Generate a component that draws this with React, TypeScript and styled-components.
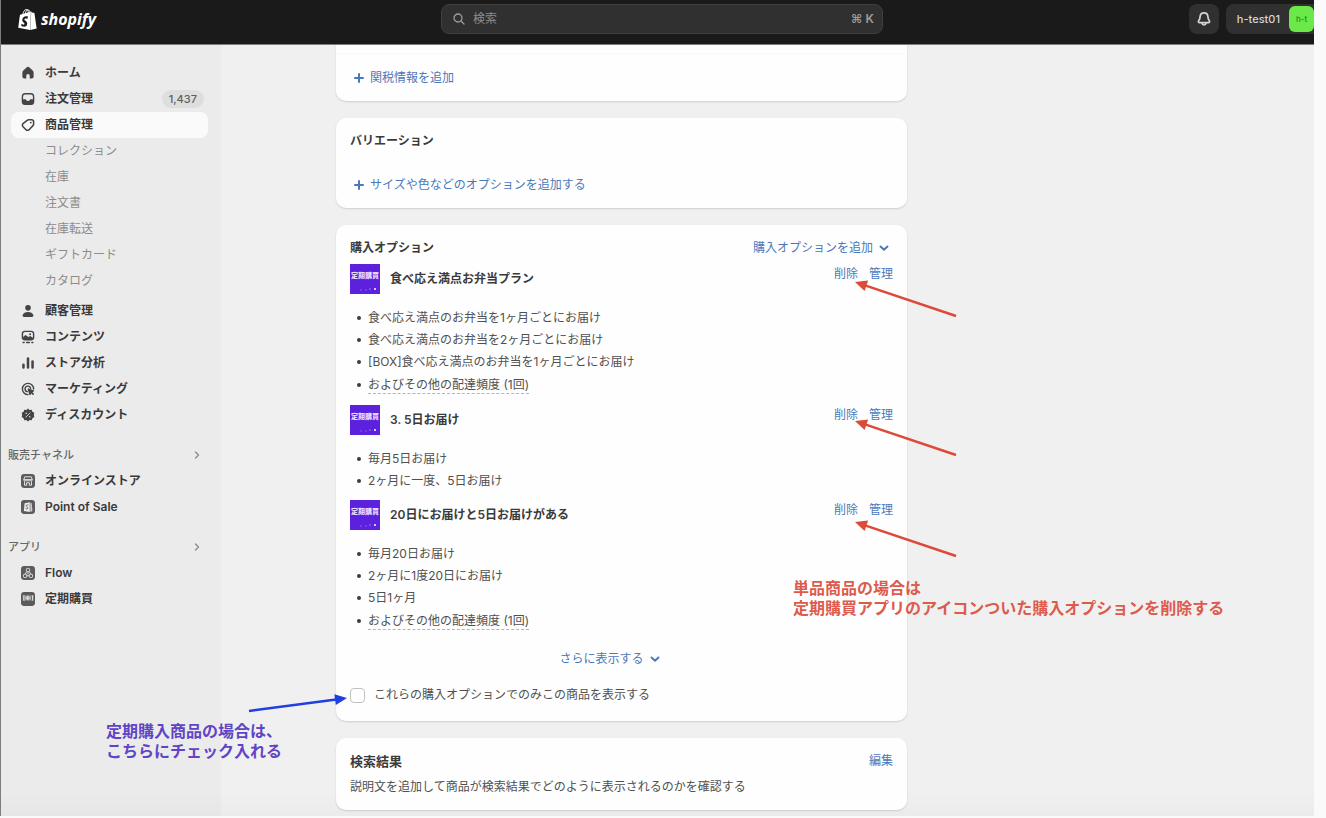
import React from "react";
import styled, { createGlobalStyle, css } from "styled-components";
import { SiShopify } from "react-icons/si";

const fontStack = `Inter, "Noto Sans CJK JP", sans-serif`;
const color = {
  text: "#3a3a3a",
  body: "#505050",
  muted: "#8c8c8c",
  link: "#4a79ba",
  red: "#dc4a38",
  redText: "#dd5b4c",
  blue: "#1f3fe0",
  purple: "#6144c6",
};

const GlobalStyle = createGlobalStyle`
  * { box-sizing: border-box; }
  body {
    margin: 0;
    background: #fafafa;
    color: ${color.text};
    font-family: ${fontStack};
    font-size: 12px;
    line-height: 20px;
  }
  button, input { font: inherit; color: inherit; }
  button { border: 0; padding: 0; background: none; cursor: pointer; }
  ul { list-style: none; margin: 0; padding: 0; }
  h2, h3, p { margin: 0; font-size: inherit; }
  a { text-decoration: none; color: inherit; }
`;

const Frame = styled.div`
  position: relative;
  display: flex;
  flex-direction: column;
  min-height: calc(100vh - 2px);
  margin: 0 12px 2px 0;
  border-left: 1px solid #7c7f82;
  background: linear-gradient(to top, #ebebeb, #f0f0f0 24px);
`;

const TopBar = styled.header`
  display: grid;
  grid-template-columns: 1fr minmax(0, 442px) 1fr;
  align-items: center;
  height: 45px;
  padding: 0 0 6px 9px;
  background: #1a1a1a;
  border-bottom: 1px solid #7d7d7d;
`;

const Brand = styled.a`
  display: flex;
  align-items: center;
  gap: 3px;
  padding-left: 7px;
  color: #fff;
  font: italic 700 16px/24px "Open Sans", sans-serif;
`;

const SearchBox = styled.label`
  display: flex;
  align-items: center;
  gap: 8px;
  height: 30px;
  padding: 0 8px 0 11px;
  border: 1px solid #3e3e3e;
  border-radius: 8px;
  background: #303030;
  color: #9c9c9c;
`;

const SearchInput = styled.input`
  flex: 1;
  min-width: 0;
  padding: 0;
  border: 0;
  outline: 0;
  background: none;
  &::placeholder { color: #8c8c8c; opacity: 1; }
`;

const Shortcut = styled.kbd`
  font: 600 12px/20px Inter, "DejaVu Sans", sans-serif;
`;

const TopActions = styled.div`
  display: flex;
  justify-content: flex-end;
  gap: 7px;
`;

const BellButton = styled.button`
  display: grid;
  place-items: center;
  width: 30px;
  height: 30px;
  border-radius: 8px;
  background: #303030;
  color: #d4d4d4;
`;

const AccountButton = styled.button`
  display: flex;
  align-items: center;
  gap: 9px;
  height: 30px;
  padding-left: 11px;
  border-radius: 8px 0 0 8px;
  background: #303030;
  color: #d4d4d4;
  font-size: 11px;
  font-weight: 500;
`;

const Avatar = styled.span`
  display: grid;
  place-items: center;
  width: 25px;
  height: 26px;
  border-radius: 6px;
  background: #6be84a;
  color: #2f8a24;
  font-size: 8px;
`;

const Body = styled.div`
  display: flex;
  flex: 1;
`;

const Sidebar = styled.nav`
  flex: none;
  width: 220px;
  padding: 15px 13px 14px 0;
  background: linear-gradient(to top, #e6e6e6, #ebebeb 24px);
`;

const NavGroup = styled.ul`
  margin-top: 4px;
  padding-left: 10px;
  &:first-child { margin-top: 0; }
`;

const NavLink = styled.a<{ $active?: boolean; $sub?: boolean }>`
  display: flex;
  align-items: center;
  gap: 10px;
  height: 26px;
  padding: 0 4px 0 10px;
  border-radius: 8px;
  font-weight: 600;
  ${(p) => p.$active && css`background: #fafafa;`}
  ${(p) => p.$sub && css`
    padding-left: 34px;
    font-weight: 400;
    color: ${color.muted};
  `}
`;

const NavIcon = styled.svg`
  flex: none;
  width: 14px;
  height: 14px;
  color: #444;
`;

const Count = styled.span`
  margin-left: auto;
  padding: 0 7px;
  border-radius: 9px;
  background: #dedede;
  color: #606060;
  font-size: 11px;
  font-weight: 500;
  line-height: 18px;
`;

const SectionButton = styled.button`
  display: flex;
  align-items: center;
  justify-content: space-between;
  width: 100%;
  height: 26px;
  padding: 0 6px 0 7px;
  margin-top: 14px;
  color: #666;
  font-size: 11px;
  font-weight: 500;
  & > svg { color: #8c8c8c; }
  & + ${NavGroup} { margin-top: 0; }
`;

const Content = styled.main`
  flex: 1;
  display: grid;
  grid-template-columns: minmax(0, 1fr) 276px;
  align-content: start;
  gap: 16px;
  padding: 0 115px 6px;
`;

const Cards = styled.div`
  display: flex;
  flex-direction: column;
  gap: 17px;
`;

const Card = styled.section<{ $cut?: boolean }>`
  display: flex;
  flex-direction: column;
  padding: 13px 14px;
  border-radius: ${(p) => (p.$cut ? "0 0 10px 10px" : "10px")};
  background: #fefefe;
  box-shadow: 0 1px 2px rgba(0, 0, 0, 0.14);
  ${(p) => p.$cut && css`
    padding-top: 0;
    &::before {
      content: "";
      height: 8px;
      margin: 0 -14px 14px;
      border-bottom: 1px solid #f8f8f8;
    }
  `}
`;

const CardHead = styled.div`
  display: flex;
  justify-content: space-between;
`;

const CardTitle = styled.h2<{ $large?: boolean }>`
  font-size: ${(p) => (p.$large ? 13 : 12)}px;
  font-weight: 600;
`;

const LinkButton = styled.button<{ $menu?: boolean }>`
  display: flex;
  align-items: center;
  gap: 6px;
  padding-right: ${(p) => (p.$menu ? 4 : 0)}px;
  color: ${color.link};
  line-height: 20px;
`;

const AddRow = styled.div`
  display: flex;
  padding-left: 4px;
  ${CardHead} + & { margin-top: 24px; }
`;

const PlanList = styled.div`
  display: flex;
  flex-direction: column;
  gap: 8px;
  margin-top: 6px;
`;

const PlanHead = styled.div`
  display: flex;
  align-items: center;
  gap: 10px;
  height: 30px;
`;

const PlanTitle = styled.h3`
  flex: 1;
  font-weight: 600;
`;

const PlanActions = styled.div`
  display: flex;
  align-self: flex-start;
  gap: 11px;
`;

const AppTile = styled.span`
  position: relative;
  display: grid;
  justify-items: center;
  align-items: start;
  width: 30px;
  height: 30px;
  padding-top: 4px;
  overflow: hidden;
  background: #5b21dc;
  color: #ecd9fb;
  font-size: 7px;
  font-weight: 900;
  line-height: 16px;
  white-space: nowrap;
  &::after {
    content: "";
    position: absolute;
    right: 4px;
    bottom: 4px;
    width: 2px;
    height: 2px;
    border-radius: 1px;
    background: #fff;
    box-shadow: -5px 0 0 #8558ea, -9px 1px 0 #7a49e6, -14px 1px 0 #7a49e6;
  }
`;

const PlanItems = styled.ul`
  margin-top: 13px;
  padding-left: 7px;
  color: ${color.body};
`;

const PlanItem = styled.li`
  display: flex;
  align-items: center;
  gap: 7px;
  line-height: 22px;
  &::before {
    content: "";
    width: 4px;
    height: 4px;
    border-radius: 50%;
    background: #3c3c3c;
  }
`;

const MoreText = styled.span`
  margin: 3px 0;
  line-height: 17px;
  border-bottom: 1px dashed #b4b4b4;
`;

const ShowMore = styled.div`
  display: flex;
  justify-content: center;
  margin-top: 16px;
  padding-right: 24px;
`;

const CheckLabel = styled.label`
  display: flex;
  align-items: center;
  gap: 9px;
  height: 26px;
  margin-top: 13px;
  color: ${color.body};
`;

const Checkbox = styled.input`
  appearance: none;
  width: 15px;
  height: 15px;
  margin: 0;
  border: 1px solid #c0c0c0;
  border-radius: 4px;
  background: #fff;
`;

const Description = styled.p`
  margin-top: 6px;
  color: ${color.body};
`;

const Arrows = styled.svg`
  position: absolute;
  left: 0;
  top: 0;
  width: 1000px;
  height: 800px;
  pointer-events: none;
`;

const Note = styled.p<{ $x: number; $y: number; $color: string }>`
  position: absolute;
  left: ${(p) => p.$x}px;
  top: ${(p) => p.$y}px;
  color: ${(p) => p.$color};
  font-size: 16px;
  font-weight: 600;
  line-height: 20px;
  white-space: nowrap;
`;

const stroke = {
  fill: "none",
  stroke: "currentColor",
  strokeWidth: 2,
  strokeLinecap: "round" as const,
  strokeLinejoin: "round" as const,
};

const icons: Record<string, React.ReactNode> = {
  home: (
    <path fill="currentColor" d="M8.3 1.9a2.6 2.6 0 0 1 3.4 0l5 4.4A3.8 3.8 0 0 1 18 9.200V15.500a2.500 2.500 0 0 1-2.500 2.500H12.500v-4a2.500 2.500 0 0 0-5 0v4H4.500A2.500 2.500 0 0 1 2 15.500V9.200a3.800 3.800 0 0 1 1.300-2.900z" />
  ),
  orders: (
    <>
      <rect x="2" y="2.500" width="16" height="15" rx="4" {...stroke} />
      <path fill="currentColor" d="M2 10.500h4.500c.8 0 1 2.500 3.500 2.500s2.700-2.500 3.500-2.500H18V14a4 4 0 0 1-4 4H6a4 4 0 0 1-4-4z" />
    </>
  ),
  products: (
    <>
      <path {...stroke} strokeWidth={2.2} d="M11 2.500h4a3 3 0 0 1 3 3v3.300a3 3 0 0 1-.9 2.100l-5.600 5.800a3 3 0 0 1-4.300 0l-4.300-4.300a3 3 0 0 1 0-4.300l5.900-4.700A3 3 0 0 1 11 2.500z" />
      <circle cx="14" cy="6.500" r="1.300" fill="currentColor" />
    </>
  ),
  customers: (
    <path fill="currentColor" d="M10 1.500a4 4 0 1 1 0 8 4 4 0 0 1 0-8zM10 11.500c4 0 6.500 1.600 7.600 4.300.5 1.300-.4 2.700-1.800 2.700H4.200c-1.400 0-2.300-1.400-1.800-2.700C3.500 13.100 6 11.500 10 11.500z" />
  ),
  content: (
    <>
      <rect x="2" y="2" width="16" height="12" rx="3.500" {...stroke} />
      <path fill="currentColor" d="M3 10l3.500-3 4 3 2.500-1.500L17 11v1.500L15 14H5l-2-1.500z" />
      <circle cx="13" cy="6" r="1.400" fill="currentColor" />
      <path {...stroke} d="M3 17.800h1.500M8 17.800h4M15.500 17.800H17" />
    </>
  ),
  analytics: (
    <path {...stroke} strokeWidth={3.6} d="M3.500 12.500v4M10 3.500v13M16.500 8v8.500" />
  ),
  marketing: (
    <>
      <path {...stroke} d="M18 10a8 8 0 1 0-8 8" />
      <path {...stroke} d="M13.700 9a4 4 0 1 0-4.700 4.800" />
      <path fill="currentColor" d="M9.500 10.500c-.3-.8.400-1.400 1.200-1.200l7.300 2.500c1 .4 1 1.500.1 1.900l-1.800.8 2 2c.9 1-.8 2.700-1.800 1.800l-2-2-.8 1.800c-.4.9-1.500.9-1.900-.1z" />
    </>
  ),
  discounts: (
    <>
      <path fill="currentColor" d="M10 .8l2.300 1.900 3-.3 1 2.900 2.700 1.500L18.300 10l.7 3-2.700 1.600-1 2.800-3-.2L10 19.200l-2.300-2-3 .2-1-2.800L1 13l.7-3L1 6.800l2.700-1.500 1-2.900 3 .3z" />
      <path stroke="#cfcfcf" strokeWidth="1.400" strokeLinecap="round" d="M13 7l-6 6" />
      <circle cx="7.500" cy="7.500" r="1.200" fill="#cfcfcf" />
      <circle cx="12.500" cy="12.500" r="1.200" fill="#cfcfcf" />
    </>
  ),
  store: (
    <>
      <rect width="20" height="20" rx="4.500" fill="#5c5c5c" />
      <path fill="none" stroke="#e4e4e4" strokeWidth="1.400" strokeLinejoin="round" d="M5.200 4h9.600l1.400 4.500c-.6 2-2.500 2-3.200.3-.7 1.700-2.500 1.700-3 0-.6 1.700-2.400 1.700-3 0-.8 1.700-2.700 1.700-3.200-.3zM5 10.500V16h3v-3.500h4V16h3v-5.500M4 8h12" />
    </>
  ),
  pos: (
    <>
      <rect width="20" height="20" rx="4.500" fill="#5c5c5c" />
      <path fill="#ececec" d="M5.200 4.800l7.300-1.600v14L4 15.600z" />
      <path fill="#d0d0d0" d="M13.300 3.600l2 1.200 1 10.800-3 1.400z" />
      <path fill="none" stroke="#5c5c5c" strokeWidth="1.300" d="M10.500 7.200c-2-.9-3.300.2-3 1.300.3 1.200 2.300 1.300 2.200 2.900-.1 1.400-1.700 1.700-3.200.8" />
    </>
  ),
  flow: (
    <>
      <rect width="20" height="20" rx="4.500" fill="#5c5c5c" />
      <g fill="none" stroke="#dedede" strokeWidth="1.400">
        <rect x="7.700" y="3.500" width="4.600" height="4.600" rx="1.200" />
        <rect x="3.500" y="11.800" width="4.600" height="4.600" rx="1.200" />
        <rect x="11.900" y="11.800" width="4.600" height="4.600" rx="1.200" />
        <path d="M10 8v4M8 14h4M6 11.800L8 8M14 11.800L12 8" />
      </g>
    </>
  ),
  teiki: (
    <>
      <rect width="20" height="20" rx="4.500" fill="#5a5a5a" />
      <path stroke="#e6e6e6" strokeWidth="1.300" d="M2.500 5.500h3M4 5.500v6M2.500 8.300h3.200M2.500 11.500h3.500M7 5v7M9.300 5v7M7 7.300h2.300M7 9.500h2.300M11 5v7M13 5v7M11 8.500h2M15 5.500h3M15.200 8.300h2.700M15 11.500h3M16.500 5.500v6" />
    </>
  ),
};

const Icon = ({ name }: { name: string }) => (
  <NavIcon viewBox="0 0 20 20" aria-hidden="true">
    {icons[name]}
  </NavIcon>
);

const Chevron = ({ right }: { right?: boolean }) => (
  <svg width="10" height="10" viewBox="0 0 10 10" aria-hidden="true">
    <path {...stroke} strokeWidth={right ? 1.4 : 1.9} d={right ? "M3.500 2l3 3-3 3" : "M1.500 3.500l3.500 3.300L8.500 3.500"} />
  </svg>
);

const Plus = () => (
  <svg width="10" height="10" viewBox="0 0 10 10" aria-hidden="true">
    <path {...stroke} strokeWidth={2} d="M5 1v8M1 5h8" />
  </svg>
);

type NavEntry = { label: string; icon?: string; active?: boolean; count?: string };

const mainNav: NavEntry[] = [
  { label: "ホーム", icon: "home" },
  { label: "注文管理", icon: "orders", count: "1,437" },
  { label: "商品管理", icon: "products", active: true },
  { label: "コレクション" },
  { label: "在庫" },
  { label: "注文書" },
  { label: "在庫転送" },
  { label: "ギフトカード" },
  { label: "カタログ" },
];
const manageNav: NavEntry[] = [
  { label: "顧客管理", icon: "customers" },
  { label: "コンテンツ", icon: "content" },
  { label: "ストア分析", icon: "analytics" },
  { label: "マーケティング", icon: "marketing" },
  { label: "ディスカウント", icon: "discounts" },
];
const channelNav: NavEntry[] = [
  { label: "オンラインストア", icon: "store" },
  { label: "Point of Sale", icon: "pos" },
];
const appNav: NavEntry[] = [
  { label: "Flow", icon: "flow" },
  { label: "定期購買", icon: "teiki" },
];

const plans = [
  {
    title: "食べ応え満点お弁当プラン",
    items: [
      "食べ応え満点のお弁当を1ヶ月ごとにお届け",
      "食べ応え満点のお弁当を2ヶ月ごとにお届け",
      "[BOX]食べ応え満点のお弁当を1ヶ月ごとにお届け",
    ],
    more: "およびその他の配達頻度 (1回)",
  },
  { title: "3. 5日お届け", items: ["毎月5日お届け", "2ヶ月に一度、5日お届け"] },
  {
    title: "20日にお届けと5日お届けがある",
    items: ["毎月20日お届け", "2ヶ月に1度20日にお届け", "5日1ヶ月"],
    more: "およびその他の配達頻度 (1回)",
  },
];

function Nav({ entries }: { entries: NavEntry[] }) {
  return (
    <NavGroup>
      {entries.map((e) => (
        <li key={e.label}>
          <NavLink href="#" $active={e.active} $sub={!e.icon}>
            {e.icon && <Icon name={e.icon} />}
            {e.label}
            {e.count && <Count>{e.count}</Count>}
          </NavLink>
        </li>
      ))}
    </NavGroup>
  );
}

function Arrow({ x1, y1, x2, y2, tone }: { x1: number; y1: number; x2: number; y2: number; tone: string }) {
  const angle = (Math.atan2(y2 - y1, x2 - x1) * 180) / Math.PI;
  const length = Math.hypot(x2 - x1, y2 - y1);
  return (
    <g transform={`translate(${x1} ${y1}) rotate(${angle})`}>
      <path d={`M0 0H${length - 9}`} stroke={tone} strokeWidth="2.500" />
      <path d={`M${length} 0l-12 -5.500v11z`} fill={tone} />
    </g>
  );
}

export default function App() {
  return (
    <>
      <GlobalStyle />
      <Frame>
        <TopBar>
          <Brand href="#">
            <SiShopify size={21} aria-hidden="true" />
            shopify
          </Brand>
          <SearchBox>
            <svg width="12" height="12" viewBox="0 0 12 12" aria-hidden="true">
              <circle cx="5" cy="5" r="4" {...stroke} strokeWidth={1.300} />
              <path {...stroke} strokeWidth={1.300} d="M8 8l3 3" />
            </svg>
            <SearchInput type="search" placeholder="検索" aria-label="検索" />
            <Shortcut>⌘ K</Shortcut>
          </SearchBox>
          <TopActions>
            <BellButton aria-label="通知">
              <svg width="16" height="16" viewBox="0 0 16 16" aria-hidden="true">
                <path {...stroke} strokeWidth={1.700} d="M8 1.800c-2.300 0-3.700 1.600-3.900 3.700l-.3 2.200-1.300 2.400c-.4.800.1 1.500.9 1.500h9.200c.8 0 1.300-.7.900-1.500l-1.300-2.400-.3-2.200C11.700 3.400 10.300 1.800 8 1.800z" />
                <path {...stroke} strokeWidth={1.700} d="M6 12c.2 1.300 1 2 2 2s1.800-.7 2-2" />
              </svg>
            </BellButton>
            <AccountButton>
              h-test01
              <Avatar>h-t</Avatar>
            </AccountButton>
          </TopActions>
        </TopBar>

        <Body>
          <Sidebar>
            <Nav entries={mainNav} />
            <Nav entries={manageNav} />
            <SectionButton>
              販売チャネル
              <Chevron right />
            </SectionButton>
            <Nav entries={channelNav} />
            <SectionButton>
              アプリ
              <Chevron right />
            </SectionButton>
            <Nav entries={appNav} />
          </Sidebar>

          <Content>
            <Cards>
              <Card $cut>
                <AddRow>
                  <LinkButton><Plus />関税情報を追加</LinkButton>
                </AddRow>
              </Card>

              <Card>
                <CardHead>
                  <CardTitle>バリエーション</CardTitle>
                </CardHead>
                <AddRow>
                  <LinkButton><Plus />サイズや色などのオプションを追加する</LinkButton>
                </AddRow>
              </Card>

              <Card>
                <CardHead>
                  <CardTitle>購入オプション</CardTitle>
                  <LinkButton $menu>購入オプションを追加<Chevron /></LinkButton>
                </CardHead>
                <PlanList>
                  {plans.map((plan) => (
                    <div key={plan.title}>
                      <PlanHead>
                        <AppTile aria-hidden="true">定期購買</AppTile>
                        <PlanTitle>{plan.title}</PlanTitle>
                        <PlanActions>
                          <LinkButton>削除</LinkButton>
                          <LinkButton>管理</LinkButton>
                        </PlanActions>
                      </PlanHead>
                      <PlanItems>
                        {plan.items.map((item) => (
                          <PlanItem key={item}>{item}</PlanItem>
                        ))}
                        {plan.more && (
                          <PlanItem><MoreText>{plan.more}</MoreText></PlanItem>
                        )}
                      </PlanItems>
                    </div>
                  ))}
                </PlanList>
                <ShowMore>
                  <LinkButton>さらに表示する<Chevron /></LinkButton>
                </ShowMore>
                <CheckLabel>
                  <Checkbox type="checkbox" />
                  これらの購入オプションでのみこの商品を表示する
                </CheckLabel>
              </Card>

              <Card>
                <CardHead>
                  <CardTitle $large>検索結果</CardTitle>
                  <LinkButton>編集</LinkButton>
                </CardHead>
                <Description>説明文を追加して商品が検索結果でどのように表示されるのかを確認する</Description>
              </Card>
            </Cards>
          </Content>
        </Body>

        <Arrows viewBox="0 0 1000 800" aria-hidden="true">
          <Arrow x1={955} y1={316} x2={854} y2={282} tone={color.red} />
          <Arrow x1={955} y1={455} x2={854} y2={421} tone={color.red} />
          <Arrow x1={955} y1={556} x2={854} y2={522} tone={color.red} />
          <Arrow x1={248} y1={711} x2={346} y2={698} tone={color.blue} />
        </Arrows>
        <Note $x={792} $y={578} $color={color.redText}>
          単品商品の場合は
          <br />
          定期購買アプリのアイコンついた購入オプションを削除する
        </Note>
        <Note $x={105} $y={721} $color={color.purple}>
          定期購入商品の場合は、
          <br />
          こちらにチェック入れる
        </Note>
      </Frame>
    </>
  );
}
